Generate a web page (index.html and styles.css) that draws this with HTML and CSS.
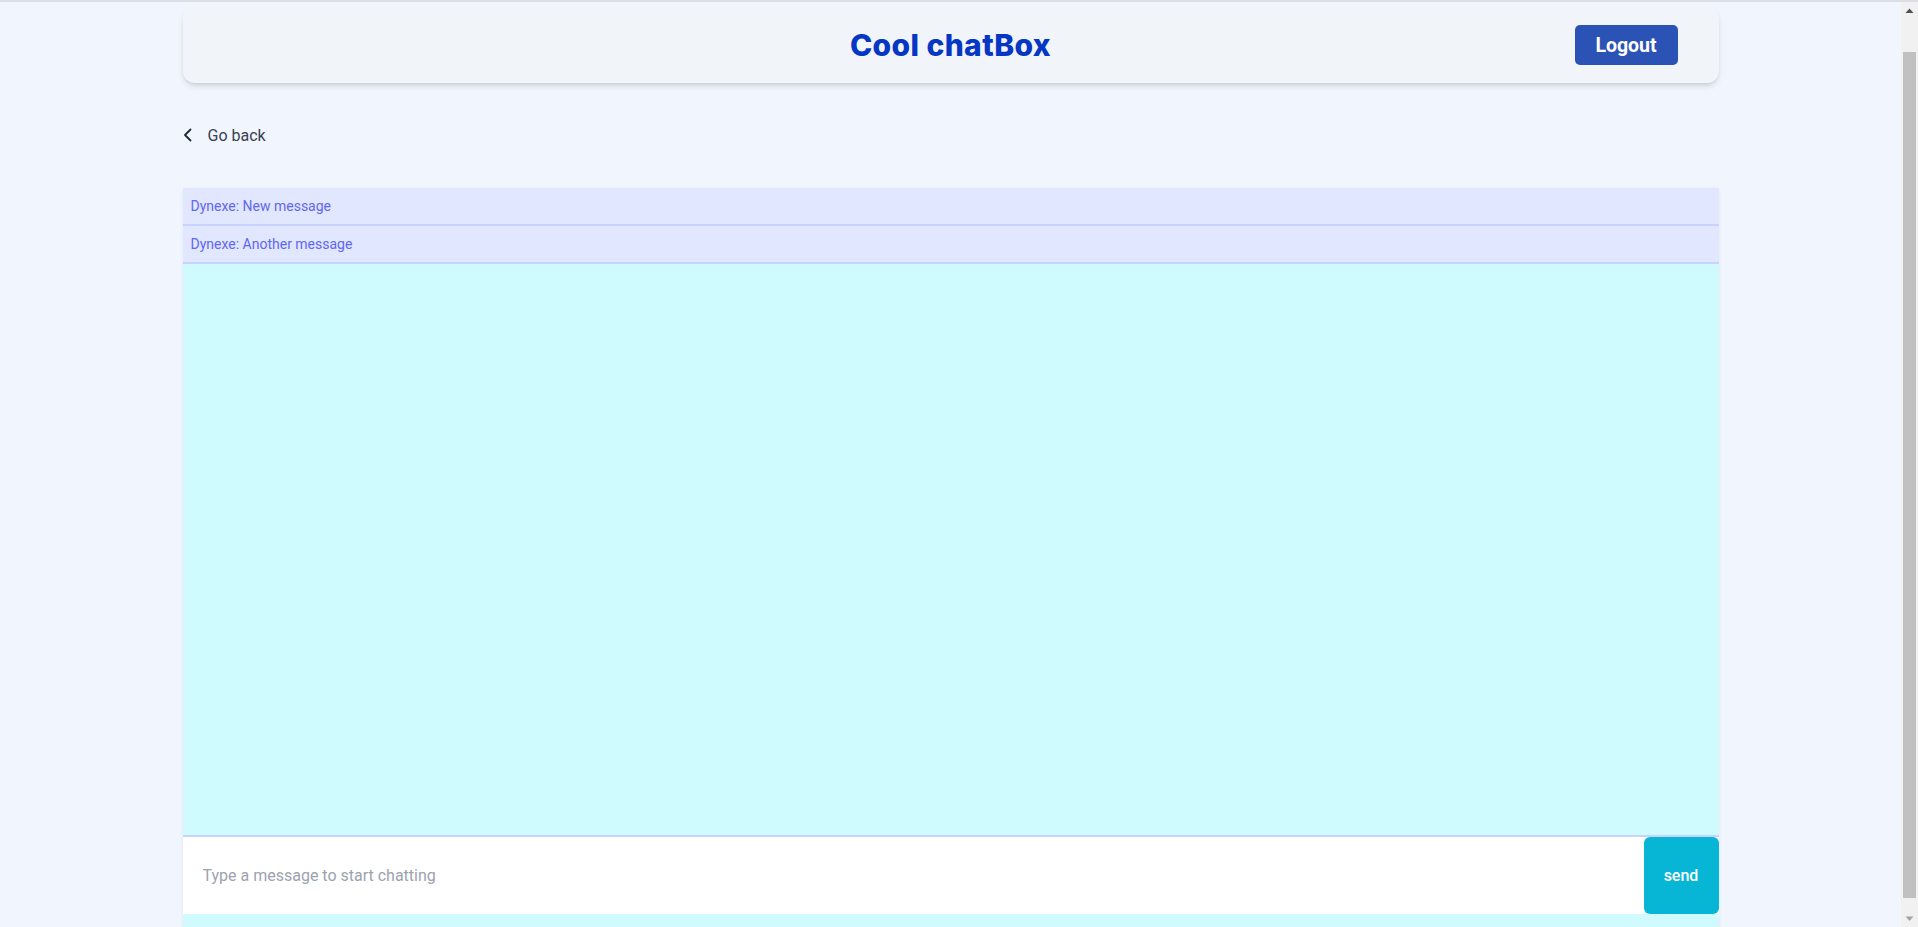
FILE: index.html
```html
<!DOCTYPE html>
<html lang="en">
<head>
<meta charset="utf-8">
<title>Cool chatBox</title>
<link rel="stylesheet" href="styles.css">
</head>
<body>
<div class="container">
  <header class="topbar">
    <div class="spacer"></div>
    <h1 class="title">Cool chatBox</h1>
    <div class="actions"><button class="logout">Logout</button></div>
  </header>

  <a class="back" href="#">
    <svg class="chev" width="10" height="14" viewBox="0 0 10 14" aria-hidden="true"><path d="M7.5 1.5 L2 7 L7.5 12.5" fill="none" stroke="currentColor" stroke-width="1.8" stroke-linecap="round" stroke-linejoin="round"/></svg>
    <span>Go back</span>
  </a>

  <section class="chat">
    <div class="messages">
      <div class="msg">Dynexe: New message</div>
      <div class="msg">Dynexe: Another message</div>
    </div>
    <form class="composer">
      <input class="input" type="text" placeholder="Type a message to start chatting">
      <button class="send" type="button">send</button>
    </form>
    <div class="chat-foot"></div>
  </section>
</div>

<div class="scrollbar" aria-hidden="true">
  <svg class="arrow" width="17" height="17" viewBox="0 0 17 17"><path d="M4.5 11 L8.5 6.5 L12.5 11 Z" fill="#505050"/></svg>
  <div class="track"><div class="thumb"></div></div>
  <svg class="arrow" width="17" height="17" viewBox="0 0 17 17"><path d="M4.5 6.5 L8.5 11 L12.5 6.5 Z" fill="#a3a3a3"/></svg>
</div>
</body>
</html>
```

FILE: styles.css
```css
html, body {
  margin: 0;
  padding: 0;
}
body {
  background: #f0f5fe;
  border-top: 2px solid #dcdfe4;
  padding-right: 17px;
  font-family: Roboto, "Noto Sans", Arial, sans-serif;
  color: #374151;
}
.container {
  width: 1536px;
  margin: 0 auto;
  padding-bottom: 40px;
}
.topbar {
  margin-top: 4px;
  height: 77px;
  box-sizing: border-box;
  background: #f1f4f9;
  border-radius: 12px;
  box-shadow: 0 4px 6px -1px rgba(0,0,0,0.12), 0 2px 4px -2px rgba(0,0,0,0.1);
  display: grid;
  grid-template-columns: 1fr auto 1fr;
  align-items: center;
  padding: 0 41px;
}
.title {
  margin: 0;
  font-family: Inter, "Noto Sans", sans-serif;
  font-weight: 800;
  font-size: 30px;
  letter-spacing: 0.4px;
  color: #0537c4;
}
.actions {
  display: flex;
  justify-content: flex-end;
}
.logout {
  width: 103px;
  height: 40px;
  border: none;
  border-radius: 5px;
  background: #2b52b5;
  color: #ffffff;
  font-family: Roboto, sans-serif;
  font-weight: 700;
  font-size: 19.5px;
  cursor: pointer;
  margin-top: 1px;
}
.back {
  display: flex;
  align-items: center;
  gap: 15px;
  margin-top: 37px;
  height: 30px;
  color: #374151;
  text-decoration: none;
  font-size: 16px;
}
.chev {
  color: #1f2937;
  flex: none;
}
.chat {
  margin-top: 38px;
  background: #cffafe;
  border-radius: 3px 3px 0 0;
  box-shadow: 0 1px 4px rgba(0,0,0,0.06);
  display: flex;
  flex-direction: column;
}
.messages {
  height: 647px;
  display: flex;
  flex-direction: column;
}
.msg {
  background: #e0e7ff;
  border-bottom: 2px solid #c7d2fe;
  color: #6366f1;
  font-size: 14px;
  line-height: 20px;
  padding: 8px 8px;
}
.composer {
  margin: 0;
  display: flex;
  border-top: 2px solid #c7d2fe;
  background: #ffffff;
  height: 77px;
}
.input {
  flex: 1;
  border: none;
  outline: none;
  background: transparent;
  padding: 0 20px;
  font-family: Roboto, sans-serif;
  font-size: 16px;
  color: #374151;
}
.input::placeholder {
  color: #9ca3af;
}
.send {
  width: 75px;
  height: 77px;
  border: none;
  border-radius: 6px;
  background: #07b6d5;
  color: #ffffff;
  font-family: Roboto, sans-serif;
  font-weight: 500;
  font-size: 16px;
  cursor: pointer;
}
.chat-foot {
  height: 30px;
}
.scrollbar {
  position: fixed;
  top: 2px;
  right: 0;
  bottom: 0;
  width: 17px;
  background: #f1f1f1;
  display: flex;
  flex-direction: column;
}
.arrow {
  flex: none;
  display: block;
}
.track {
  flex: 1;
  padding: 33px 2px 12px;
  display: flex;
}
.thumb {
  flex: 1;
  background: #c1c1c1;
}
```
